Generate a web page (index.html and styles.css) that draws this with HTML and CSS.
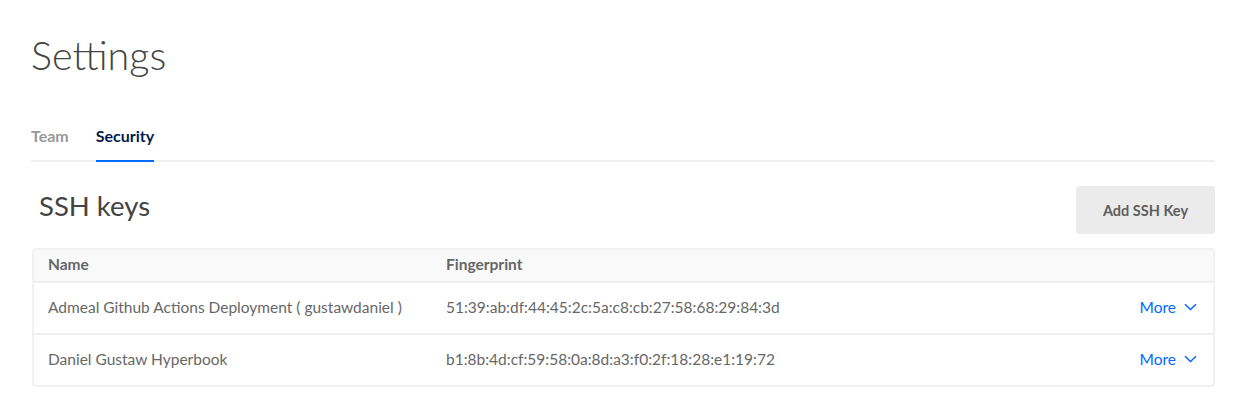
FILE: index.html
```html
<!DOCTYPE html>
<html>
<head>
<meta charset="utf-8">
<link rel="stylesheet" href="styles.css">
</head>
<body>
<div class="page">
  <h1 class="title">Settings</h1>
  <nav class="tabs">
    <a class="tab">Team</a>
    <a class="tab active">Security</a>
  </nav>
  <div class="section-head">
    <h2 class="section-title">SSH keys</h2>
    <button class="btn">Add SSH Key</button>
  </div>
  <div class="table">
    <div class="row head">
      <div class="c-name">Name</div>
      <div class="c-fp">Fingerprint</div>
      <div class="c-act"></div>
    </div>
    <div class="row">
      <div class="c-name">Admeal Github Actions Deployment ( gustawdaniel )</div>
      <div class="c-fp">51:39:ab:df:44:45:2c:5a:c8:cb:27:58:68:29:84:3d</div>
      <div class="c-act"><a class="more">More <svg width="13" height="8" viewBox="0 0 13 8"><path d="M1 1.2l5.5 5.3 5.5-5.3" fill="none" stroke="#0069ff" stroke-width="1.5"/></svg></a></div>
    </div>
    <div class="row">
      <div class="c-name">Daniel Gustaw Hyperbook</div>
      <div class="c-fp">b1:8b:4d:cf:59:58:0a:8d:a3:f0:2f:18:28:e1:19:72</div>
      <div class="c-act"><a class="more">More <svg width="13" height="8" viewBox="0 0 13 8"><path d="M1 1.2l5.5 5.3 5.5-5.3" fill="none" stroke="#0069ff" stroke-width="1.5"/></svg></a></div>
    </div>
  </div>
</div>
</body>
</html>
```
FILE: styles.css
```css
* { box-sizing: border-box; }
body {
  margin: 0;
  background: #fff;
  font-family: "Lato", "Open Sans", sans-serif;
  color: #676767;
}
.page {
  padding: 32px 27px 0 31px;
}
.title {
  margin: 0;
  font-size: 39.5px;
  font-weight: 300;
  color: #444;
  line-height: 46px;
}
.tabs {
  display: flex;
  gap: 27px;
  margin-top: 38px;
  border-bottom: 2px solid #efefef;
}
.tab {
  font-size: 16px;
  font-weight: 700;
  color: #999;
  padding: 10px 0 15px;
  margin-bottom: -2px;
  border-bottom: 2px solid transparent;
}
.tab.active {
  color: #031b4e;
  border-bottom-color: #0069ff;
}
.section-head {
  display: flex;
  justify-content: space-between;
  align-items: center;
  margin-top: 24px;
}
.section-title {
  margin: 0 0 10px 8px;
  font-size: 27.5px;
  font-weight: 400;
  color: #444;
}
.btn {
  height: 48px;
  width: 139px;
  border: none;
  border-radius: 3px;
  background: #ebebeb;
  color: #5e5e5e;
  font-family: inherit;
  font-size: 14.5px;
  font-weight: 700;
}
.table {
  margin-top: 14px;
  margin-left: 1px;
  border: 2px solid #f1f1f1;
  border-radius: 4px;
}
.row {
  display: flex;
  align-items: center;
  height: 52px;
  padding: 0 16px 3px 14px;
  font-size: 15.5px;
  border-top: 2px solid #efefef;
}
.row.head {
  height: 31px;
  border-top: none;
  background: #f9f9f9;
  font-weight: 700;
  color: #666;
}
.c-name { width: 398px; }
.c-fp { flex: 1; }
.c-act { text-align: right; }
.more {
  color: #0069ff;
  display: inline-flex;
  align-items: center;
  gap: 8px;
}
```
